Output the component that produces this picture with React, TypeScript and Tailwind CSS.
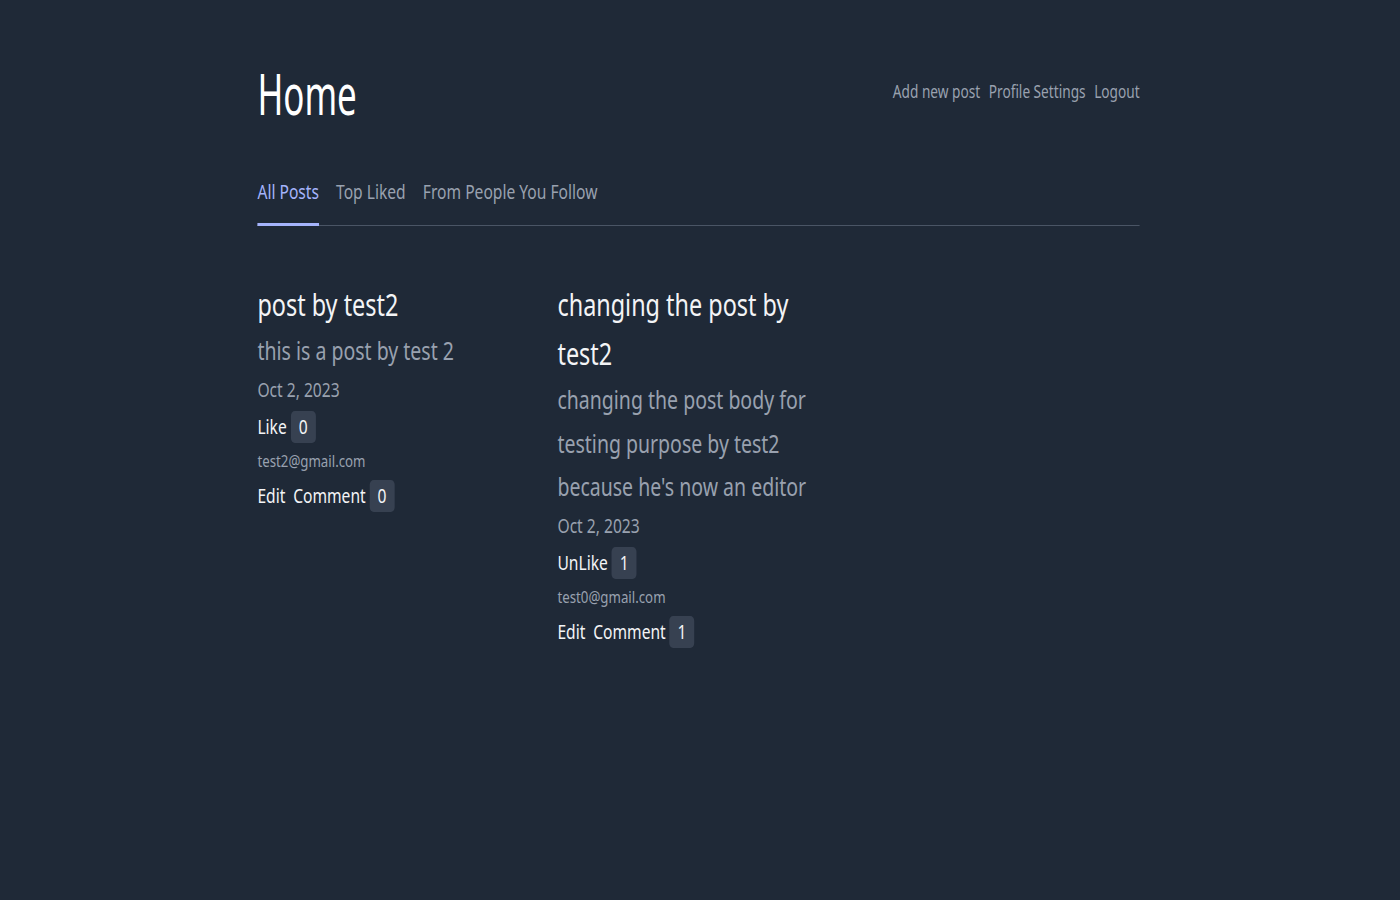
import React from "react";

type Post = {
  title: string;
  body: string;
  date: string;
  likeLabel: string;
  likes: number;
  email: string;
  comments: number;
};

const posts: Post[] = [
  {
    title: "post by test2",
    body: "this is a post by test 2",
    date: "Oct 2, 2023",
    likeLabel: "Like",
    likes: 0,
    email: "test2@gmail.com",
    comments: 0,
  },
  {
    title: "changing the post by test2",
    body: "changing the post body for testing purpose by test2 because he's now an editor",
    date: "Oct 2, 2023",
    likeLabel: "UnLike",
    likes: 1,
    email: "test0@gmail.com",
    comments: 1,
  },
];

function Badge({ n }: { n: number }) {
  return (
    <span className="ml-[5px] inline-flex h-[32px] min-w-[32px] items-center justify-center rounded-[5px] bg-[#374151] px-[9px] text-[20px] leading-none text-gray-100">
      {n}
    </span>
  );
}

function PostCard({ p }: { p: Post }) {
  return (
    <div className="flex flex-col items-start">
      <h2 className="text-[30px] leading-[49px] text-gray-100">{p.title}</h2>
      <p className="text-[25px] leading-[43.5px] text-gray-400">{p.body}</p>
      <p className="text-[20px] leading-[34px] text-gray-400">{p.date}</p>
      <div className="flex h-[40px] items-center">
        <button className="text-[20px] leading-none text-gray-100">{p.likeLabel}</button>
        <Badge n={p.likes} />
      </div>
      <p className="text-[17px] leading-[28px] text-gray-400">{p.email}</p>
      <div className="flex h-[42px] items-center">
        <button className="text-[20px] leading-none text-gray-100">Edit</button>
        <button className="ml-[10px] text-[20px] leading-none text-gray-100">Comment</button>
        <Badge n={p.comments} />
      </div>
    </div>
  );
}

export default function App() {
  return (
    <div className="flex min-h-[900px] w-full justify-center bg-[#1f2937] pr-[4px] font-['Noto_Sans','Open_Sans',sans-serif]">
      <div className="w-[1131px] shrink-0 scale-x-[0.78] pt-[65px]">
        <header className="flex items-center justify-between">
          <h1 className="origin-left scale-x-[0.8] text-[56px] leading-[56px] text-white">Home</h1>
          <nav className="mb-[4px] flex gap-[11px] text-[17.5px] leading-[28px] text-gray-400">
            <a>Add new post</a>
            <a>Profile Settings</a>
            <a>Logout</a>
          </nav>
        </header>
        <div className="mt-[53px] flex gap-[22px] border-b border-gray-600">
          <button className="-mb-px border-b-[3px] border-[#a5b4fc] pb-[15px] pt-[2px] text-[20px] leading-[32px] text-[#a5b4fc]">
            All Posts
          </button>
          <button className="-mb-px border-b-[3px] border-transparent pb-[15px] pt-[2px] text-[20px] leading-[32px] text-gray-400">
            Top Liked
          </button>
          <button className="-mb-px border-b-[3px] border-transparent pb-[15px] pt-[2px] text-[20px] leading-[32px] text-gray-400">
            From People You Follow
          </button>
        </div>
        <div className="mt-[54px] grid grid-cols-3 gap-x-[23px]">
          {posts.map((p, i) => (
            <PostCard key={i} p={p} />
          ))}
        </div>
      </div>
    </div>
  );
}
